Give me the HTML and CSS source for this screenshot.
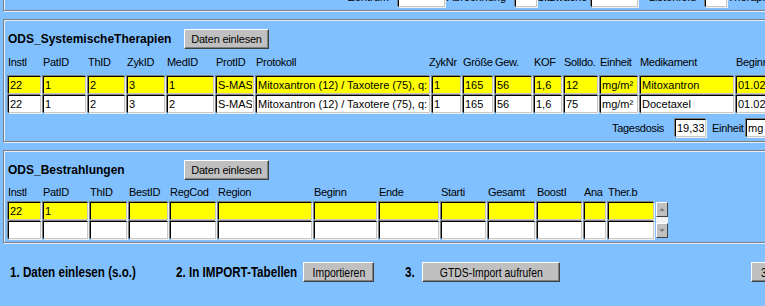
FILE: index.html
```html
<!DOCTYPE html>
<html lang="de">
<head>
    <meta charset="UTF-8">
    <title>ODS Import</title>
    <link rel="stylesheet" href="styles.css">
</head>
<body>
    <!-- oberer Bereich (abgeschnitten) -->
    <div class="box top-box">
        <div class="top-fields">
            <span class="top-label w53">Zentrum</span><input class="field" style="width:47px" value="">
            <span class="top-label w70">Abrechnung</span><input class="field" style="width:22px" value="">
            <span class="top-label w54">Sitzwache</span><input class="field" style="width:47px" value="">
            <span class="top-label w67">Listenfeld</span><input class="field" style="width:22px" value="">
            <span class="top-label w53">Therapie</span>
        </div>
    </div>

    <!-- Systemische Therapien -->
    <div class="box section sec-therapie">
        <div class="title-row">
            <span class="section-title">ODS_SystemischeTherapien</span>
            <button class="btn">Daten einlesen</button>
        </div>
        <div class="grid grid-therapie heads">
            <span>Instl</span><span>PatID</span><span>ThID</span><span>ZykID</span><span>MedID</span>
            <span>ProtID</span><span>Protokoll</span><span class="shift">ZykNr</span><span>Größe</span><span>Gew.</span>
            <span>KOF</span><span>Solldo.</span><span>Einheit</span><span>Medikament</span><span>Beginn</span>
        </div>
        <div class="grid grid-therapie rows">
            <input class="field current" value="22"><input class="field current" value="1"><input class="field current" value="2">
            <input class="field current" value="3"><input class="field current" value="1"><input class="field current" value="S-MAS">
            <input class="field current" value="Mitoxantron (12) / Taxotere (75), q:3w"><input class="field current" value="1">
            <input class="field current" value="165"><input class="field current" value="56"><input class="field current" value="1,6">
            <input class="field current" value="12"><input class="field current" value="mg/m²"><input class="field current" value="Mitoxantron">
            <input class="field current" value="01.02.2005">

            <input class="field" value="22"><input class="field" value="1"><input class="field" value="2">
            <input class="field" value="3"><input class="field" value="2"><input class="field" value="S-MAS">
            <input class="field" value="Mitoxantron (12) / Taxotere (75), q:3w"><input class="field" value="1">
            <input class="field" value="165"><input class="field" value="56"><input class="field" value="1,6">
            <input class="field" value="75"><input class="field" value="mg/m²"><input class="field" value="Docetaxel">
            <input class="field" value="01.02.2005">
        </div>
        <div class="dose-row">
            <span class="dose-label">Tagesdosis</span>
            <input class="field dose-in" value="19,33">
            <span class="unit-label">Einheit</span>
            <input class="field unit-in" value="mg">
        </div>
    </div>

    <!-- Bestrahlungen -->
    <div class="box section sec-bestr">
        <div class="title-row">
            <span class="section-title">ODS_Bestrahlungen</span>
            <button class="btn">Daten einlesen</button>
        </div>
        <div class="grid grid-bestr heads">
            <span>Instl</span><span>PatID</span><span>ThID</span><span>BestID</span><span>RegCod</span>
            <span>Region</span><span>Beginn</span><span>Ende</span><span>Starti</span><span>Gesamt</span>
            <span>BoostI</span><span>Ana</span><span>Ther.b</span>
        </div>
        <div class="grid grid-bestr rows">
            <input class="field current" value="22"><input class="field current" value="1"><input class="field current" value="">
            <input class="field current" value=""><input class="field current" value=""><input class="field current" value="">
            <input class="field current" value=""><input class="field current" value=""><input class="field current" value="">
            <input class="field current" value=""><input class="field current" value=""><input class="field current" value="">
            <input class="field current" value="">
            <div class="scrollbar">
                <div class="sb-btn"><span class="arrow up"></span></div>
                <div class="sb-track"></div>
                <div class="sb-btn"><span class="arrow down"></span></div>
            </div>

            <input class="field" value=""><input class="field" value=""><input class="field" value="">
            <input class="field" value=""><input class="field" value=""><input class="field" value="">
            <input class="field" value=""><input class="field" value=""><input class="field" value="">
            <input class="field" value=""><input class="field" value=""><input class="field" value="">
            <input class="field" value="">
        </div>
    </div>

    <!-- Ablauf -->
    <div class="steps">
        <span class="step step1"><span class="squeeze">1. Daten einlesen (s.o.)</span></span>
        <span class="step step2"><span class="squeeze">2. In IMPORT-Tabellen</span></span>
        <button class="btn narrow btn-import"><span class="squeeze-c">Importieren</span></button>
        <span class="step step3"><span class="squeeze">3.</span></span>
        <button class="btn narrow btn-gtds"><span class="squeeze-c">GTDS-Import aufrufen</span></button>
        <button class="btn narrow btn-cut"><span class="squeeze-c">3a. Abgleich</span></button>
    </div>
</body>
</html>
```

FILE: styles.css
```css
body {
    margin: 0;
    width: 765px;
    height: 306px;
    overflow: hidden;
    background-color: #80c0ff;
    font-family: 'Liberation Sans', Arial, sans-serif;
    font-size: 11px;
    color: #000;
}

/* eingelassene Rahmen wie im Access-Formular */
.box {
    margin-left: 3px;
    width: 820px;
    border: 1px solid #808080;
    box-shadow: 1px 1px 0 #e4eef8, inset 1px 1px 0 #e4eef8;
    box-sizing: border-box;
}

.top-box {
    margin-top: -20px;
    height: 31px;
    padding-left: 341px;
}

.top-fields {
    display: flex;
    align-items: flex-end;
    height: 26px;
}

.top-label {
    flex-shrink: 0;
    text-align: right;
    padding-right: 9px;
    box-sizing: border-box;
    line-height: 11px;
    margin-bottom: 4px;
    white-space: nowrap;
    overflow: hidden;
}

.w53 { width: 53px; }
.w54 { width: 54px; }
.w67 { width: 67px; }
.w70 { width: 70px; }

.section {
    margin-top: 8px;
    padding-left: 4px;
}

.sec-therapie {
    padding-top: 9px;
    padding-bottom: 4px;
}

.sec-bestr {
    padding-top: 9px;
    padding-bottom: 3px;
}

.title-row {
    display: flex;
    align-items: center;
    height: 20px;
}

.section-title {
    width: 176px;
    font-size: 12px;
    font-weight: bold;
}

.btn {
    flex-shrink: 0;
    font-family: 'Liberation Sans', Arial, sans-serif;
    font-size: 11px;
    letter-spacing: -0.2px;
    color: #000;
    background-color: #c0c0c0;
    border: 1px solid;
    border-color: #fff #404040 #404040 #fff;
    box-shadow: inset -1px -1px 0 #808080;
    padding: 0;
    width: 85px;
    height: 20px;
    cursor: pointer;
    white-space: nowrap;
    overflow: hidden;
}

.grid {
    display: grid;
}

.grid-therapie {
    grid-template-columns: 35px 45px 39px 40px 49px 40px 176px 31px 32px 39px 30px 36px 40px 96px 60px;
}

.grid-bestr {
    grid-template-columns: 35px 47px 39px 41px 48px 96px 65px 62px 47px 49px 47px 24px 48px 12px;
}

.heads {
    line-height: 12px;
    letter-spacing: -0.3px;
    white-space: nowrap;
}

.sec-therapie .heads {
    margin-top: 7px;
}

.sec-bestr .heads {
    margin-top: 6px;
}

.shift {
    margin-left: -3px;
}

.rows {
    row-gap: 1px;
}

.sec-therapie .rows {
    margin-top: 8px;
}

.sec-bestr .rows {
    margin-top: 4px;
}

.field {
    flex-shrink: 0;
    width: calc(100% - 2px);
    height: 18px;
    box-sizing: border-box;
    margin: 0;
    padding: 0 1px;
    font-family: 'Liberation Sans', Arial, sans-serif;
    font-size: 11px;
    color: #000;
    background-color: #fff;
    border: 1px solid;
    border-color: #000 #c8c8c8 #c8c8c8 #000;
    box-shadow: -1px -1px 0 #808080, 1px 1px 0 #f0f0f0;
    outline: none;
}

.field.current {
    background-color: #ffff00;
}

.dose-row {
    display: flex;
    align-items: center;
    margin-top: 6px;
    padding-left: 604px;
    letter-spacing: -0.3px;
}

.dose-label {
    flex-shrink: 0;
    width: 63px;
}

.field.dose-in {
    width: 31px;
    margin-right: 6px;
    letter-spacing: 0;
}

.unit-label {
    flex-shrink: 0;
    width: 34px;
    white-space: nowrap;
}

.field.unit-in {
    width: 40px;
    letter-spacing: 0;
}

/* Bildlaufleiste rechts neben den Bestrahlungen */
.scrollbar {
    grid-row: span 2;
    display: flex;
    flex-direction: column;
    width: 12px;
    height: 36px;
    background-color: #f4f4f4;
}

.sb-btn {
    height: 15px;
    box-sizing: border-box;
    background-color: #c0c0c0;
    border: 1px solid;
    border-color: #fff #404040 #404040 #fff;
    display: flex;
    align-items: center;
    justify-content: center;
}

.sb-track {
    flex: 1;
}

.arrow {
    width: 0;
    height: 0;
    border-left: 3px solid transparent;
    border-right: 3px solid transparent;
}

.arrow.up {
    border-bottom: 3px solid #808080;
}

.arrow.down {
    border-top: 3px solid #808080;
}

.steps {
    display: flex;
    align-items: center;
    margin-top: 19px;
    padding-left: 10px;
    white-space: nowrap;
}

/* schmale Schrift nachgebildet */
.step {
    flex-shrink: 0;
    font-size: 14px;
    font-weight: bold;
}

.squeeze {
    display: inline-block;
    transform: scaleX(0.83);
    transform-origin: left center;
}

.squeeze-c {
    display: inline-block;
    transform: scaleX(0.8);
}

.step1 {
    width: 166px;
}

.step2 {
    width: 127px;
}

.btn.narrow {
    font-size: 13px;
    letter-spacing: 0;
}

.btn-import {
    width: 71px;
    margin-right: 31px;
}

.step3 {
    width: 17px;
}

.btn-gtds {
    width: 138px;
    margin-right: 191px;
}

.btn-cut {
    width: 70px;
    text-align: left;
    padding-left: 2px;
}
```
